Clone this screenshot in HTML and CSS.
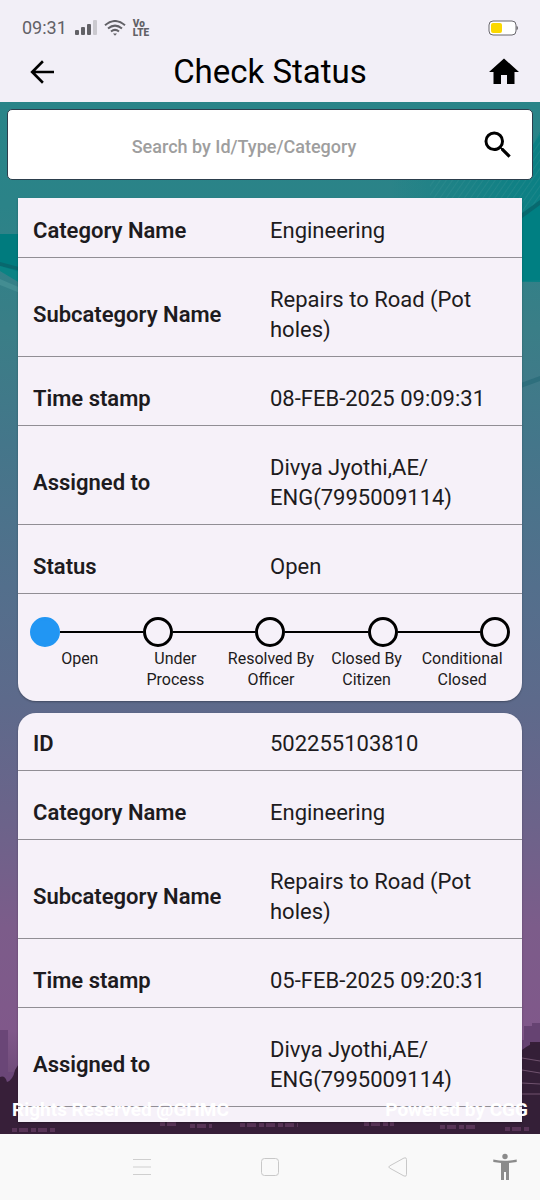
FILE: index.html
```html
<!DOCTYPE html>
<html lang="en">
<head>
    <meta charset="UTF-8">
    <meta name="viewport" content="width=device-width, initial-scale=1.0">
    <title>Check Status</title>
    <link rel="stylesheet" href="styles.css">
</head>
<body>

    <!-- phone status bar -->
    <div class="status-bar">
        <span class="clock">09:31</span>
        <svg class="signal" width="22" height="16" viewBox="0 0 22 16">
            <rect x="0" y="10" width="4" height="5" rx="1"/>
            <rect x="6" y="7" width="4" height="8" rx="1"/>
            <rect x="12" y="4" width="4" height="11" rx="1"/>
            <rect x="18" y="0" width="4" height="15" rx="1" fill="#cbc9cf"/>
        </svg>
        <svg class="wifi" width="22" height="16" viewBox="0 0 22 16" fill="none" stroke="#626166" stroke-width="2">
            <path d="M1 5.200Q11-3.200 21 5.200"/>
            <path d="M4 8.600Q11 2.600 18 8.600"/>
            <path d="M7 11.600Q11 8.200 15 11.600"/>
            <path d="M9 13.500h4l-2 2.300z" fill="#626166" stroke="none"/>
        </svg>
        <span class="volte">Vo<br>LTE</span>
        <svg class="battery" width="30" height="16" viewBox="0 0 30 16">
            <rect x="1" y="1" width="27" height="14" rx="4" fill="#fff" stroke="#69676d"/>
            <rect x="3" y="3" width="11" height="10" rx="2" fill="#fbd800"/>
            <path d="M28.500 6q1.500 0 1.500 2t-1.500 2z" fill="#69676d"/>
        </svg>
    </div>

    <!-- app bar -->
    <header class="app-bar">
        <button class="icon-button" type="button" aria-label="Back">
            <svg width="36" height="36" viewBox="0 0 24 24"><path d="M20 11.100H7.600l5.600-5.600L12 4.200 4.200 12l7.800 7.800 1.200-1.300-5.600-5.600H20z"/></svg>
        </button>
        <h1 class="title">Check Status</h1>
        <button class="icon-button" type="button" aria-label="Home">
            <svg width="36" height="36" viewBox="0 0 24 24"><path d="M10 20v-6h4v6h5v-8h3L12 3 2 12h3v8z"/></svg>
        </button>
    </header>

    <main class="content">
        <!-- teal to purple sky with the city at the bottom -->
        <svg class="backdrop" viewBox="0 0 540 1032" preserveAspectRatio="none" aria-hidden="true">
            <defs>
                <linearGradient id="sky" x1="0" y1="0" x2="0" y2="1">
                    <stop offset="0" stop-color="#298488"/>
                    <stop offset="0.1" stop-color="#2b8388"/>
                    <stop offset="0.22" stop-color="#3a7e87"/>
                    <stop offset="0.33" stop-color="#44768a"/>
                    <stop offset="0.47" stop-color="#536f8c"/>
                    <stop offset="0.58" stop-color="#5d6a8b"/>
                    <stop offset="0.7" stop-color="#6c638a"/>
                    <stop offset="0.8" stop-color="#7c5c8a"/>
                    <stop offset="0.9" stop-color="#80588a"/>
                    <stop offset="1" stop-color="#5a3c63"/>
                </linearGradient>
                <linearGradient id="wave" x1="0" y1="0" x2="1" y2="0">
                    <stop offset="0" stop-color="#0b8084" stop-opacity="0"/>
                    <stop offset="1" stop-color="#0b8084"/>
                </linearGradient>
                <pattern id="stripes" width="5" height="5" patternUnits="userSpaceOnUse" patternTransform="rotate(35)">
                    <path d="M0 0v5" stroke="#3f9496" stroke-width="2"/>
                </pattern>
            </defs>
            <rect width="540" height="1032" fill="url(#sky)"/>
            <path d="M390 100V76H500Q525 60 540 30V180H390z" fill="url(#wave)"/>
            <path d="M430 96V76H500Q525 60 540 30V105L510 130V96z" fill="url(#stripes)" opacity="0.3"/>
            <path d="M510 120L540 100V178L510 180z" fill="#007f82"/>
            <path d="M510 120L540 98V103L510 125z" fill="#08696f"/>
            <path d="M510 285L540 274V279L510 290z" fill="#2e6f7d"/>
            <path d="M0 132h30v54L0 168z" fill="#007b7e"/>
            <path d="M0 160L30 168v3L0 164z" fill="#08686e"/>
            <path d="M0 164l30 9v14L0 169z" fill="#0a8384"/>
            <path d="M0 177l30 13v5L0 183z" fill="#438d92"/>
            <path d="M0 928h8v42h7v10h5v52H0z" fill="#6a4677"/>
            <path d="M520 938h4v-14h8v-3h8v80h-20z" fill="#664372"/>
            <path d="M0 975q5-2 7 5 6-2 8-12l5-8v25l510-2V940h10v92H0z" fill="#371f39"/>
            <path d="M522 948q10-8 18-6v90h-20z" fill="#341f37"/>
            <path d="M522 956l18 3M522 968l18 3M522 981l18 1M522 992h18" stroke="#70536f" fill="none"/>
            <path d="M12 1028h44M160 1022h18M190 1024h22M240 1023h58M364 1022h30M440 1025h38M505 1027h25" stroke="#583457" stroke-width="4" stroke-dasharray="5 2 9 3" fill="none"/>
        </svg>

        <form class="search">
            <input class="search-input" type="text" placeholder="Search by Id/Type/Category" aria-label="Search by Id/Type/Category">
            <button class="icon-button" type="button" aria-label="Search">
                <svg width="36" height="36" viewBox="0 0 24 24"><path d="M15.500 14h-.79l-.28-.27A6.470 6.470 0 0 0 16 9.500 6.500 6.500 0 1 0 9.500 16c1.610 0 3.090-.59 4.230-1.570l.27.28v.79l5 4.990L20.490 19l-4.990-5zm-6 0C7.010 14 5 11.990 5 9.500S7.010 5 9.500 5 14 7.010 14 9.500 11.990 14 9.500 14z"/></svg>
            </button>
        </form>

        <div class="list">
            <section class="card card-cut-top">
                <dl class="rows">
                    <div class="row"><dt>Category Name</dt><dd>Engineering</dd></div>
                    <div class="row"><dt>Subcategory Name</dt><dd>Repairs to Road (Pot holes)</dd></div>
                    <div class="row"><dt>Time stamp</dt><dd>08-FEB-2025 09:09:31</dd></div>
                    <div class="row"><dt>Assigned to</dt><dd>Divya Jyothi,AE/<wbr>ENG(7995009114)</dd></div>
                    <div class="row"><dt>Status</dt><dd>Open</dd></div>
                </dl>
                <div class="stepper">
                    <div class="track">
                        <span class="dot done"></span>
                        <span class="line"></span>
                        <span class="dot"></span>
                        <span class="line"></span>
                        <span class="dot"></span>
                        <span class="line"></span>
                        <span class="dot"></span>
                        <span class="line"></span>
                        <span class="dot"></span>
                    </div>
                    <ol class="steps">
                        <li>Open</li>
                        <li>Under Process</li>
                        <li>Resolved By Officer</li>
                        <li>Closed By Citizen</li>
                        <li>Conditional Closed</li>
                    </ol>
                </div>
            </section>

            <section class="card card-cut-bottom">
                <dl class="rows">
                    <div class="row"><dt>ID</dt><dd>502255103810</dd></div>
                    <div class="row"><dt>Category Name</dt><dd>Engineering</dd></div>
                    <div class="row"><dt>Subcategory Name</dt><dd>Repairs to Road (Pot holes)</dd></div>
                    <div class="row"><dt>Time stamp</dt><dd>05-FEB-2025 09:20:31</dd></div>
                    <div class="row"><dt>Assigned to</dt><dd>Divya Jyothi,AE/<wbr>ENG(7995009114)</dd></div>
                </dl>
            </section>
        </div>

        <!-- credits lie over the end of the list -->
        <footer class="credits">
            <span>Rights Reserved @GHMC</span>
            <span>Powered by CGG</span>
        </footer>
    </main>

    <!-- phone navigation bar -->
    <nav class="nav-bar">
        <button class="nav-button recent" type="button" aria-label="Recent apps">
            <svg width="20" height="20" viewBox="0 0 20 20" stroke="#cfcfcf"><path d="M1 2.500h18M1 10h18M1 17.500h18"/></svg>
        </button>
        <button class="nav-button" type="button" aria-label="Home screen">
            <svg width="20" height="20" viewBox="0 0 20 20" fill="none" stroke="#c8c8c8"><rect x="1.500" y="1.500" width="17" height="17" rx="3"/></svg>
        </button>
        <button class="nav-button" type="button" aria-label="Back">
            <svg width="20" height="20" viewBox="0 0 20 20" fill="none" stroke="#c8c8c8"><path d="M1.500 9L16 1q2.500-1 2.500 1.500v15Q18.500 20 16 19L1.500 11q-1.500-1 0-2z"/></svg>
        </button>
        <button class="nav-button accessibility" type="button" aria-label="Accessibility">
            <svg width="24" height="28" viewBox="0 0 24 28" fill="#8b8b8b"><circle cx="12" cy="3.500" r="2.700"/><path d="M.3 6.500Q12 9 23.700 6.500v2.400L16 10v17h-3v-8h-2v8H8V10L.3 8.900z"/></svg>
        </button>
    </nav>

</body>
</html>
```
FILE: styles.css
```css
* {
    box-sizing: border-box;
}

body {
    margin: 0;
    min-height: 100vh;
    display: flex;
    flex-direction: column;
    background-color: #f2eff7;
    color: #1d1b20;
    font-family: Roboto, "Liberation Sans", sans-serif;
}

button {
    padding: 0;
    border: 0;
    background: none;
    cursor: pointer;
}

svg {
    display: block;
}

/* status bar */
.status-bar {
    display: flex;
    align-items: center;
    gap: 7px;
    height: 42px;
    padding: 13px 22px 0;
    color: #626166;
}

.clock {
    font-size: 18px;
    line-height: 29px;
    margin-right: 1px;
}

.signal {
    fill: #626166;
}

.volte {
    font-size: 10px;
    font-weight: 900;
    line-height: 9px;
}

.battery {
    margin-left: auto;
}

/* app bar */
.app-bar {
    display: flex;
    align-items: center;
    height: 60px;
    padding: 0 18px 0 24px;
}

.title {
    flex: 1;
    margin: 0;
    padding-right: 6px;
    color: #000;
    font-size: 33px;
    font-weight: 400;
    line-height: 60px;
    text-align: center;
}

/* content area */
.content {
    position: relative;
    z-index: 0;
    flex: 1;
    display: flex;
    flex-direction: column;
    padding: 7px 0 12px;
}

.backdrop {
    position: absolute;
    top: 0;
    left: 0;
    width: 100%;
    height: 100%;
    z-index: -1;
}

.search {
    display: flex;
    align-items: center;
    height: 71px;
    margin: 0 7px;
    padding-right: 16px;
    background-color: #fff;
    border: 1px solid #2c3e4c;
    border-radius: 5px;
}

.search-input {
    flex: 1;
    min-width: 0;
    height: 100%;
    padding: 4px 0 0;
    border: 0;
    outline: 0;
    background: none;
    color: #1d1b20;
    font-family: inherit;
    font-size: 18px;
    font-weight: 500;
    text-align: center;
}

.search-input::placeholder {
    color: #9e9e9e;
}

.list {
    flex: 1;
    display: flex;
    flex-direction: column;
    gap: 12px;
    margin: 18px 18px 0;
}

.card {
    background-color: #f6f1f9;
    border-radius: 18px;
    box-shadow: 0 1px 2px rgba(0, 0, 0, 0.3);
}

.card-cut-top {
    border-top-left-radius: 0;
    border-top-right-radius: 0;
}

.card-cut-bottom {
    flex: 1;
    border-bottom-left-radius: 0;
    border-bottom-right-radius: 0;
    padding-bottom: 15px;
}

.rows {
    margin: 0;
}

.row {
    display: flex;
    align-items: center;
    padding: 27px 15px 11px;
    border-bottom: 1px solid #918e95;
    font-size: 22px;
    line-height: 30px;
}

.row:first-child {
    padding-top: 16px;
}

.card-cut-top .row:first-child {
    padding-top: 18px;
}

.row dt {
    flex: 1;
    font-weight: 600;
}

.row dd {
    flex: 1;
    margin: 0;
}

/* progress of the complaint */
.stepper {
    padding: 23px 12px 11px;
}

.track {
    display: flex;
    align-items: center;
}

.dot {
    width: 30px;
    height: 30px;
    border: 3px solid #000;
    border-radius: 50%;
}

.dot.done {
    border-color: #2196f3;
    background-color: #2196f3;
}

.line {
    flex: 1;
    height: 2px;
    background-color: #000;
}

.steps {
    display: flex;
    margin: 0;
    padding: 1px 0 0 2px;
    list-style: none;
    font-size: 16px;
    line-height: 21px;
    text-align: center;
}

.steps li {
    flex: 1 1 0;
    padding: 0 4px;
}

.credits {
    position: absolute;
    left: 12px;
    right: 12px;
    bottom: 12px;
    display: flex;
    justify-content: space-between;
    color: #fff;
    font-size: 19px;
    font-weight: 700;
    line-height: 24px;
}

/* navigation bar */
.nav-bar {
    display: grid;
    grid-template-columns: 78px 1fr 1fr 1fr 78px;
    place-items: center;
    height: 66px;
    background-color: #f9f9f9;
}

.recent {
    grid-column: 2;
}

.accessibility {
    justify-self: end;
    margin-right: 23px;
}
```
